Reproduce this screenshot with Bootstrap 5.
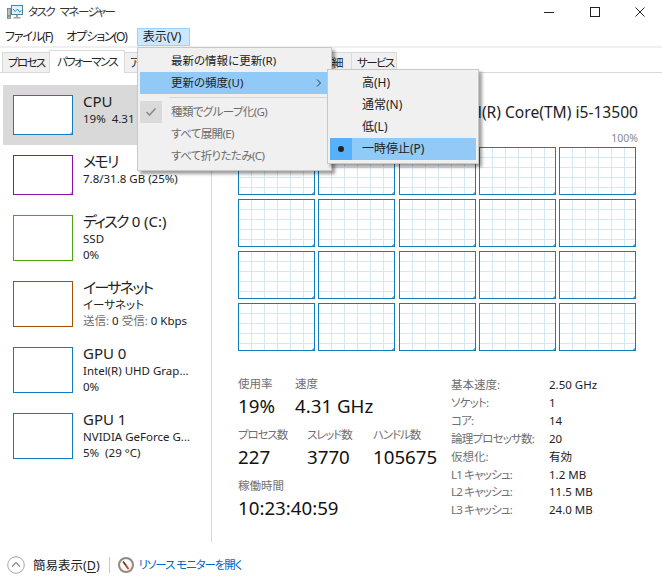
<!DOCTYPE html>
<html lang="ja"><head><meta charset="utf-8"><title>タスク マネージャー</title>
<link href="https://cdn.jsdelivr.net/npm/bootstrap@5.3.0/dist/css/bootstrap.min.css" rel="stylesheet">
<style>
html,body{height:100%;overflow:hidden}
body{width:662px;height:588px;background:#fff;color:#222;font-family:"Noto Sans","Noto Sans CJK JP",sans-serif;font-size:12px;font-feature-settings:"palt";position:relative;line-height:1.2}
.tm-title{height:28px;padding:0 16px 4px 7px;font-size:11.5px;color:#333}
.tm-title-text{letter-spacing:-1.5px;word-spacing:4px}
.tm-winbtns{width:103px}
.tm-menubar{height:18px;padding-left:1px}
.tm-menuitem{height:18px;padding:0 3px;margin-right:6px;border:1px solid transparent;display:flex;align-items:center;font-size:12px;color:#222;letter-spacing:-1.1px;white-space:nowrap}
.tm-menuitem.tm-open{background:#cce8ff;border-color:#99d1ff;width:53px;padding-left:5px;letter-spacing:0;margin-right:0}
.tm-rule{height:2px;background:#f0f0f0}
.tm-tabs{height:25px;padding-left:2px;border-bottom:1px solid #d9d9d9;--bs-nav-tabs-border-width:0;align-items:flex-end;flex-wrap:nowrap}
.tm-tab{height:20px;background:#f0f0f0;border:1px solid #d9d9d9;border-bottom:0;padding:0 0 0 5px;color:#222;display:flex;align-items:center;font-size:11.5px;letter-spacing:-1.6px;white-space:nowrap;overflow:hidden;margin-left:-1px}
.tm-tab:first-child{margin-left:0}
.tm-tab.tm-on{background:#fff;height:23px;margin-bottom:-1px;position:relative;padding-left:7px}
.tm-t1{width:48px}.tm-t2{width:76px}.tm-t3{width:62px}.tm-t4{width:74px}.tm-t5{width:59px}.tm-t6{width:36px}.tm-t7{width:46px}
.tm-main{height:469px}
.tm-side{width:212px;border-right:1px solid #d9d9d9;padding-top:12px;flex:none}
.tm-proc{display:flex;margin-left:3px;padding:10px 0 0 10px;height:66px;color:#222}
.tm-proc.tm-first{height:60px;background:#d9d9d9}
.tm-proc.tm-second{height:60px}
.tm-thumb{width:60px;height:46px;background:#fff;border:1px solid;flex:none;margin-right:10px}
.tm-first .tm-thumb,.tm-second .tm-thumb{height:40px;background-image:linear-gradient(135deg,transparent calc(100% - 2px),#b5b5b5 0)}
.tm-first .tm-thumb,.tm-gpu{border-color:#117dbb}
.tm-mem{border-color:#8b12ae}.tm-disk{border-color:#4da60c}.tm-net{border-color:#a74f01}
.tm-name{font-size:15px;line-height:16px;margin-top:-2px;margin-bottom:2px;color:#222;white-space:nowrap}
.tm-name-kana{letter-spacing:-1.7px}
.tm-sub{font-size:11.5px;line-height:16px;white-space:nowrap}
.tm-grey{color:#707070}
.tm-panel{padding:0 24px 0 26px;width:450px}
.tm-cpuhead{height:57px;padding-top:28px;font-size:17px;line-height:22px;white-space:nowrap}
.tm-cpuhead span{font-size:15.6px}
.tm-axis{height:17px;padding-top:2px;font-size:10.5px;color:#8a8a8a;line-height:12px}
.tm-grid{display:grid;grid-template-columns:repeat(5,77px);grid-template-rows:repeat(4,48px);column-gap:3.25px;row-gap:4px;height:204px}
.tm-cell{border:1px solid #117dbb;background-color:#fff;background-image:linear-gradient(135deg,transparent calc(100% - 2px),#6fb0d8 0),linear-gradient(#d5e7f3 0 1px,transparent 1px 100%),linear-gradient(90deg,#d5e7f3 0 1px,transparent 1px 100%);background-size:100% 100%,13px 10px,13px 10px;background-position:0 0,0 9px,12px 0}
.tm-stats{margin-top:25px}
.tm-left{width:213px;flex:none}
.tm-lab{font-size:11.5px;color:#707070;line-height:15px;white-space:nowrap}
.tm-lab-kana{letter-spacing:-1.1px}
.tm-val{font-size:18.7px;color:#111;line-height:24px;margin-top:3px;white-space:nowrap}
.tm-s1{height:51px}.tm-s2{height:51px}
.tm-w1{width:57px}.tm-w2{width:69px}.tm-w3{width:66px}
.tm-specs{font-size:11.5px;line-height:17.9px;white-space:nowrap}
.tm-specs .tm-k{width:98px;color:#707070}
.tm-specs .tm-k-kana{letter-spacing:-.8px}
.tm-specs .tm-v{color:#222}
.tm-foot{height:46px;padding-left:7px}
.tm-less{font-size:12.5px;color:#222;margin-left:8px}
.tm-less u{text-underline-offset:2px}
.tm-sep{width:1px;height:16px;background:#c8c8c8;margin:0 8px 0 9px}
.tm-link{color:#0066cc;text-decoration:none;font-size:11.5px;margin-left:5px;letter-spacing:-1.1px}
.tm-menu{position:absolute;display:block;background:#f0f0f0;border:1px solid #c8c8c8;border-radius:0;padding:2px;margin:0;min-width:0;box-shadow:3px 3px 3px rgba(0,0,0,.38);z-index:5}
.tm-menu1{left:137px;top:47px;width:195px;height:124px}
.tm-menu2{left:327px;top:69px;width:152px;height:95px;z-index:6}
.tm-mi{height:22px;padding:0 0 0 31px;display:flex;align-items:center;color:#222;position:relative;font-size:12px;line-height:1}
.tm-menu1 .tm-mi{font-size:11.5px}
.tm-menu2 .tm-mi{padding-left:32px}
.tm-mi.tm-hot{background:#91c9f7;color:#222}
.tm-mi.tm-off{color:#6d6d6d;letter-spacing:-.6px}
.tm-mark{position:absolute;left:0;top:0;width:22px;height:22px;display:flex;align-items:center;justify-content:center}
.tm-checkbox{background:#dadada}
.tm-radio{background:#56b0fa}
.tm-arrow{position:absolute;right:7px;top:6px}
.tm-div{margin:3px 0 3px 29px;height:1px;background:#d7d7d7;border:0;opacity:1}
</style></head><body>
<div class="tm-title d-flex align-items-center">
 <svg width="17" height="16" viewBox="0 0 17 16"><rect x="0.5" y="4.5" width="3" height="10" fill="#b9c0c6" stroke="#6d7780" stroke-width=".8"/><rect x="1" y="11" width="2" height="2" fill="#45c04a"/><rect x="4.5" y="1.5" width="11" height="9" fill="#dff3fc" stroke="#4f8496"/><path d="M6 5l2.2 2.5L10.5 5l2 3 2-1.5" fill="none" stroke="#2a8fd0"/><path d="M9 11h2v2h2.5v1.5h-7V13H9z" fill="#9aa5ae"/></svg>
 <span class="tm-title-text ms-1">タスク マネージャー</span>
 <div class="tm-winbtns ms-auto d-flex justify-content-between align-items-center">
  <svg width="12" height="12" viewBox="0 0 12 12"><path d="M1 6.5h10" stroke="#222"/></svg>
  <svg width="12" height="12" viewBox="0 0 12 12"><rect x="1.5" y="1.5" width="9" height="9" fill="none" stroke="#222"/></svg>
  <svg width="12" height="12" viewBox="0 0 12 12"><path d="M1.5 1.5l9 9M10.5 1.5l-9 9" stroke="#222"/></svg>
 </div>
</div>
<div class="tm-menubar d-flex">
 <div class="tm-menuitem">ファイル(F)</div><div class="tm-menuitem">オプション(O)</div><div class="tm-menuitem tm-open">表示(V)</div>
</div>
<div class="tm-rule"></div>
<ul class="nav nav-tabs tm-tabs">
 <li class="tm-tab tm-t1">プロセス</li><li class="tm-tab tm-t2 tm-on">パフォーマンス</li><li class="tm-tab tm-t3">アプリの履歴</li><li class="tm-tab tm-t4">スタートアップ</li><li class="tm-tab tm-t5">ユーザー</li><li class="tm-tab tm-t6">詳細</li><li class="tm-tab tm-t7">サービス</li>
</ul>
<div class="tm-main d-flex">
 <div class="tm-side">
  <div class="tm-proc tm-first"><div class="tm-thumb"></div><div><div class="tm-name">CPU</div><div class="tm-sub">19%&nbsp; 4.31 GHz</div></div></div>
  <div class="tm-proc tm-second"><div class="tm-thumb tm-mem"></div><div><div class="tm-name tm-name-kana">メモリ</div><div class="tm-sub">7.8/31.8 GB (25%)</div></div></div>
  <div class="tm-proc"><div class="tm-thumb tm-disk"></div><div><div class="tm-name"><span class="tm-name-kana">ディスク</span> 0 (C:)</div><div class="tm-sub">SSD</div><div class="tm-sub">0%</div></div></div>
  <div class="tm-proc"><div class="tm-thumb tm-net"></div><div><div class="tm-name tm-name-kana">イーサネット</div><div class="tm-sub">イーサネット</div><div class="tm-sub"><span class="tm-grey">送信:</span> 0 <span class="tm-grey">受信:</span> 0 Kbps</div></div></div>
  <div class="tm-proc"><div class="tm-thumb tm-gpu"></div><div><div class="tm-name">GPU 0</div><div class="tm-sub">Intel(R) UHD Grap...</div><div class="tm-sub">0%</div></div></div>
  <div class="tm-proc"><div class="tm-thumb tm-gpu"></div><div><div class="tm-name">GPU 1</div><div class="tm-sub">NVIDIA GeForce G...</div><div class="tm-sub">5%&nbsp; (29 °C)</div></div></div>
 </div>
 <div class="tm-panel">
  <div class="tm-cpuhead d-flex justify-content-between"><div>CPU</div><span>Intel(R) Core(TM) i5-13500</span></div>
  <div class="tm-axis d-flex justify-content-between"><div>% 使用率</div><div>100%</div></div>
  <div class="tm-grid">
   <div class="tm-cell"></div><div class="tm-cell"></div><div class="tm-cell"></div><div class="tm-cell"></div><div class="tm-cell"></div>
   <div class="tm-cell"></div><div class="tm-cell"></div><div class="tm-cell"></div><div class="tm-cell"></div><div class="tm-cell"></div>
   <div class="tm-cell"></div><div class="tm-cell"></div><div class="tm-cell"></div><div class="tm-cell"></div><div class="tm-cell"></div>
   <div class="tm-cell"></div><div class="tm-cell"></div><div class="tm-cell"></div><div class="tm-cell"></div><div class="tm-cell"></div>
  </div>
  <div class="tm-stats d-flex">
   <div class="tm-left">
    <div class="d-flex tm-s1"><div class="tm-w1"><div class="tm-lab">使用率</div><div class="tm-val">19%</div></div><div><div class="tm-lab">速度</div><div class="tm-val">4.31 GHz</div></div></div>
    <div class="d-flex tm-s2"><div class="tm-w2"><div class="tm-lab tm-lab-kana">プロセス数</div><div class="tm-val">227</div></div><div class="tm-w3"><div class="tm-lab tm-lab-kana">スレッド数</div><div class="tm-val">3770</div></div><div><div class="tm-lab tm-lab-kana">ハンドル数</div><div class="tm-val">105675</div></div></div>
    <div><div class="tm-lab">稼働時間</div><div class="tm-val">10:23:40:59</div></div>
   </div>
   <div class="tm-specs">
    <div class="d-flex"><div class="tm-k">基本速度:</div><div class="tm-v">2.50 GHz</div></div>
    <div class="d-flex"><div class="tm-k tm-k-kana">ソケット:</div><div class="tm-v">1</div></div>
    <div class="d-flex"><div class="tm-k tm-k-kana">コア:</div><div class="tm-v">14</div></div>
    <div class="d-flex"><div class="tm-k tm-k-kana">論理プロセッサ数:</div><div class="tm-v">20</div></div>
    <div class="d-flex"><div class="tm-k">仮想化:</div><div class="tm-v">有効</div></div>
    <div class="d-flex"><div class="tm-k tm-k-kana">L1 キャッシュ:</div><div class="tm-v">1.2 MB</div></div>
    <div class="d-flex"><div class="tm-k tm-k-kana">L2 キャッシュ:</div><div class="tm-v">11.5 MB</div></div>
    <div class="d-flex"><div class="tm-k tm-k-kana">L3 キャッシュ:</div><div class="tm-v">24.0 MB</div></div>
   </div>
  </div>
 </div>
</div>
<div class="tm-foot d-flex align-items-center">
 <svg width="18" height="18" viewBox="0 0 18 18"><circle cx="9" cy="9" r="8.3" fill="none" stroke="#a8a8a8"/><path d="M5 10.5l4-4 4 4" fill="none" stroke="#8a8a8a" stroke-width="1.2"/></svg>
 <span class="tm-less">簡易表示(<u>D</u>)</span>
 <span class="tm-sep"></span>
 <svg width="16" height="16" viewBox="0 0 16 16"><circle cx="8" cy="8" r="7" fill="#fbfaf5" stroke="#8f8b80" stroke-width="2"/><path d="M5 4.5L8 8.5" stroke="#3a3a3a" stroke-width="1.6"/><path d="M7.5 8L10.5 12" stroke="#d8342a" stroke-width="1.8"/></svg>
 <a class="tm-link" href="#">リソース モニターを開く</a>
</div>
<div class="dropdown-menu show tm-menu tm-menu1">
 <div class="tm-mi">最新の情報に更新(R)</div>
 <div class="tm-mi tm-hot">更新の頻度(U)<svg class="tm-arrow" width="6" height="10" viewBox="0 0 6 10"><path d="M1 1.5l3.5 3.5L1 8.5" fill="none" stroke="#333"/></svg></div>
 <hr class="tm-div">
 <div class="tm-mi tm-off"><span class="tm-mark tm-checkbox"><svg width="12" height="10" viewBox="0 0 12 10"><path d="M1.5 5l3 3 6-6.5" fill="none" stroke="#8c8c8c" stroke-width="1.6"/></svg></span>種類でグループ化(G)</div>
 <div class="tm-mi tm-off">すべて展開(E)</div>
 <div class="tm-mi tm-off">すべて折りたたみ(C)</div>
</div>
<div class="dropdown-menu show tm-menu tm-menu2">
 <div class="tm-mi">高(H)</div>
 <div class="tm-mi">通常(N)</div>
 <div class="tm-mi">低(L)</div>
 <div class="tm-mi tm-hot"><span class="tm-mark tm-radio"><svg width="8" height="8" viewBox="0 0 8 8"><circle cx="4" cy="4" r="3" fill="#222"/></svg></span>一時停止(P)</div>
</div>
<script src="https://cdn.jsdelivr.net/npm/bootstrap@5.3.0/dist/js/bootstrap.bundle.min.js"></script>
</body></html>
